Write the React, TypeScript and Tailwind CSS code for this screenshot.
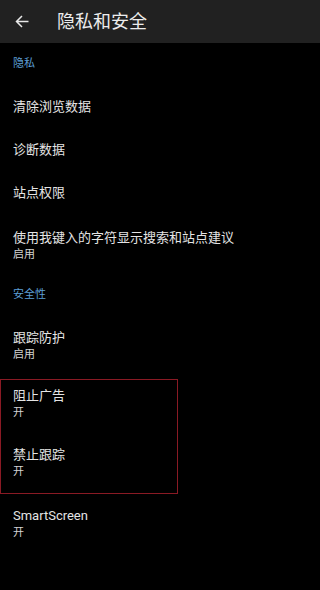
import React from "react";

const font = { fontFamily: 'Roboto, "Noto Sans CJK SC", "Noto Sans", sans-serif' };

function Item({ title, sub, h }: { title: string; sub?: string; h: string }) {
  return (
    <div className={`flex flex-col justify-center px-[13px] ${h}`}>
      <div className="text-[13px] leading-[18px] text-[#e4e4e4]">{title}</div>
      {sub && <div className="text-[11px] leading-[16px] text-[#d4d4d4]">{sub}</div>}
    </div>
  );
}

function TopItem({ title, sub, h }: { title: string; sub?: string; h: string }) {
  return (
    <div className={`flex flex-col px-[12px] ${h}`}>
      <div className="text-[13px] leading-[18px] text-[#e4e4e4]">{title}</div>
      {sub && <div className="text-[11px] leading-[16px] text-[#d4d4d4]">{sub}</div>}
    </div>
  );
}

function Section({ title, h }: { title: string; h: string }) {
  return (
    <div className={`flex items-center px-[13px] ${h}`}>
      <span className="text-[11px] leading-[16px] text-[#5d9fd6]">{title}</span>
    </div>
  );
}

export default function App() {
  return (
    <div className="w-[320px] h-[590px] bg-black overflow-hidden" style={font}>
      <div className="h-[43px] bg-[#212121] flex items-center">
        <div className="w-[57px] flex items-center pl-[15px]">
          <svg width="14" height="13" viewBox="0 0 14 13" fill="none" stroke="#e8e8e8" strokeWidth="1.5">
            <path d="M13.5 6.5H1.5M7 1L1.5 6.5 7 12" />
          </svg>
        </div>
        <span className="text-[18px] text-[#ececec]">隐私和安全</span>
      </div>
      <Section title="隐私" h="h-[42px]" />
      <Item title="清除浏览数据" h="h-[43px]" />
      <Item title="诊断数据" h="h-[44px]" />
      <Item title="站点权限" h="h-[42px]" />
      <Item title="使用我键入的字符显示搜索和站点建议" sub="启用" h="h-[63px]" />
      <Section title="安全性" h="h-[36px]" />
      <Item title="跟踪防护" sub="启用" h="h-[66px]" />
      <div className="w-[178px] border border-[#8a1a24]">
        <TopItem title="阻止广告" sub="开" h="h-[49px] pt-[7px]" />
        <TopItem title="禁止跟踪" sub="开" h="h-[64px] pt-[17px]" />
      </div>
      <Item title="SmartScreen" sub="开" h="h-[59px]" />
    </div>
  );
}
